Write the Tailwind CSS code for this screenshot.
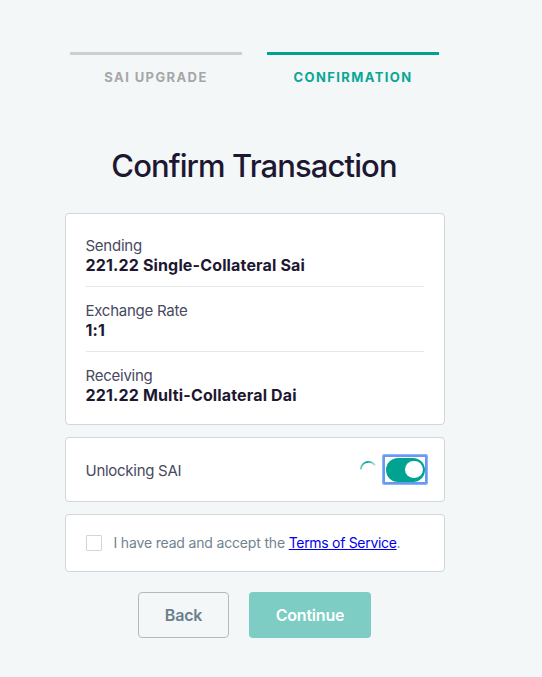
<!DOCTYPE html>
<html lang="en">
<head>
  <meta charset="UTF-8">
  <meta name="viewport" content="width=device-width, initial-scale=1.0">
  <title>Confirm Transaction</title>
  <script src="https://cdn.jsdelivr.net/npm/@tailwindcss/browser@4"></script>
</head>
<body class="bg-[#f3f7f8] font-['Inter',sans-serif] text-[#1e1732] antialiased">
  <main class="ml-[65px] w-[380px] pt-[52px]">

    <!-- Steps -->
    <div class="flex gap-[25px] pl-[5px] text-center text-[13px] leading-5 font-bold tracking-[1.4px]">
      <div class="w-[172px] border-t-3 border-[#cfcfcf] pt-3 text-[#a6a6a6]">SAI UPGRADE</div>
      <div class="w-[172px] border-t-3 border-[#00a391] pt-3 text-[#0aa695]">CONFIRMATION</div>
    </div>

    <h1 class="mt-[59px] pr-[2px] text-center text-[31px] leading-10 font-medium tracking-[-0.9px]">Confirm Transaction</h1>

    <!-- Summary -->
    <div class="mt-[27px] h-[212px] rounded-[4px] border border-[#d0d6dc] bg-white px-5 pt-2">
      <div class="h-[65px] border-b border-[#e5e7e9] pt-[14px]">
        <div class="-ml-[0.5px] text-[15px] leading-5 tracking-[-0.25px] text-[#48495f]">Sending</div>
        <div class="-mt-px -ml-[0.5px] text-base leading-5 font-bold tracking-[0.15px]">221.22 Single-Collateral Sai</div>
      </div>
      <div class="h-[65px] border-b border-[#e5e7e9] pt-[14px]">
        <div class="-ml-[0.5px] text-[15px] leading-5 tracking-[-0.25px] text-[#48495f]">Exchange Rate</div>
        <div class="-mt-px -ml-[0.5px] text-base leading-5 font-bold tracking-[0.15px]">1:1</div>
      </div>
      <div class="pt-[14px]">
        <div class="-ml-[0.5px] text-[15px] leading-5 tracking-[-0.25px] text-[#48495f]">Receiving</div>
        <div class="-mt-px -ml-[0.5px] text-base leading-5 font-bold tracking-[0.15px]">221.22 Multi-Collateral Dai</div>
      </div>
    </div>

    <!-- Unlock toggle -->
    <div class="mt-3 flex h-[65px] items-center rounded-[4px] border border-[#d0d6dc] bg-white pr-4 pl-5">
      <span class="-ml-[0.5px] pt-[3px] text-[15px] tracking-[-0.28px] text-[#48495f]">Unlocking SAI</span>
      <svg class="mr-[6px] mb-[3px] ml-auto size-4" viewBox="0 0 16 16" fill="none" stroke="url(#spin)" stroke-width="1.8">
        <linearGradient id="spin" x1="0" y1="0" x2="1" y2="0">
          <stop offset="0" stop-color="#00a391" stop-opacity="0.6" />
          <stop offset="0.45" stop-color="#00a391" />
          <stop offset="1" stop-color="#00a391" stop-opacity="0.3" />
        </linearGradient>
        <path d="M0.9 9.3C1 4.8 4.4 1.9 8.3 1.9C11 1.9 13.5 3 15 5.3" />
      </svg>
      <button class="flex h-[31px] w-[46px] items-center justify-center rounded-[3px] border-3 border-[#6699f1] outline -outline-offset-1 outline-[#8fb4f5]">
        <span class="flex h-6 w-[39px] shrink-0 items-center justify-end rounded-full bg-[#00a391] pr-[2px]">
          <span class="size-[17.5px] rounded-full bg-white"></span>
        </span>
      </button>
    </div>

    <!-- Terms -->
    <div class="mt-3 flex h-[58px] items-center rounded-[4px] border border-[#d0d6dc] bg-white px-5 text-sm text-[#708390]">
      <span class="mr-[11.5px] size-4 rounded-[1px] border border-[#d0d6e0]"></span>
      <span class="tracking-[-0.17px]">I have read and accept the <a class="tracking-[-0.3px] text-[#0000ee] underline" href="#">Terms of Service</a>.</span>
    </div>

    <!-- Actions -->
    <div class="mt-5 flex gap-5 pl-[73px] text-base font-semibold tracking-[-0.2px]">
      <button class="h-[46px] w-[91px] rounded-[4px] border border-[#b5b9bc] text-[#6b7f8c]">Back</button>
      <button class="h-[46px] w-[122px] rounded-[4px] bg-[#7dcdc5] text-white">Continue</button>
    </div>
  </main>
</body>
</html>
